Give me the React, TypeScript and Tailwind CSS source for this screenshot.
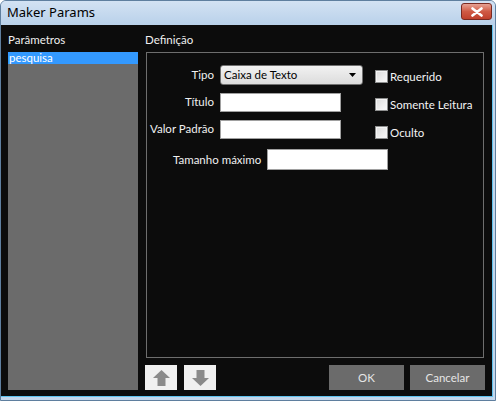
import React from "react";

const font = { fontFamily: 'Lato, "Liberation Sans", sans-serif' };

function Checkbox({ label }: { label: string }) {
  return (
    <div className="flex items-center gap-[2px]">
      <span className="w-[13px] h-[13px] border border-[#8e8f8f] bg-gradient-to-br from-[#dcdcdc] to-[#fafafa] shadow-[inset_0_0_0_1px_#f4f4f4]" />
      <span className="text-[11.5px] leading-[13px] text-[#f4f4f4] whitespace-nowrap">{label}</span>
    </div>
  );
}

function Arrow({ down }: { down?: boolean }) {
  return (
    <svg width="17" height="16" viewBox="0 0 17 16" className={down ? "rotate-180" : ""}>
      <polygon points="8.5,0 17,8 12.5,8 12.5,16 4.5,16 4.5,8 0,8" fill="#8a8a8a" />
    </svg>
  );
}

export default function App() {
  return (
    <div
      className="w-[496px] h-[401px] bg-[#c4d7ec] rounded-t-[6px] border border-[#5f7f9f] flex flex-col overflow-hidden"
      style={font}
    >
      {/* title bar */}
      <div className="h-[24px] shrink-0 flex items-center justify-between pl-[6px] pr-[3px] bg-gradient-to-b from-[#d3e2f3] to-[#b9d1ea]">
        <span className="text-[13px] text-black" style={{ fontFamily: '"Noto Sans", sans-serif' }}>
          Maker Params
        </span>
        <div className="w-[31px] h-[17px] mt-[-3px] rounded-[3px] border border-[#7a2a22] bg-gradient-to-b from-[#e6a193] via-[#cf5a45] to-[#c0402c] flex items-center justify-center">
          <svg width="12" height="10" viewBox="0 0 12 10">
            <path d="M1.5 1.5 L10.5 8.5 M10.5 1.5 L1.5 8.5" stroke="#ffffff" strokeWidth="2.6" strokeLinecap="round" />
          </svg>
        </div>
      </div>

      {/* client area */}
      <div className="flex-1 mr-[2px] mb-[3px] bg-[#0c0c0c] border-b border-r border-[#5fc3ef] flex text-[#f0f0f0] text-[11.5px]">
        {/* left column */}
        <div className="pl-[7px] pt-[6px] w-[137px] flex flex-col">
          <div className="h-[20px] leading-[18px]">Parâmetros</div>
          <div className="mt-[1px] w-[130px] h-[338px] bg-[#6b6b6b]">
            <div className="h-[12px] leading-[12px] bg-[#3399ff] text-white pl-[1px]">pesquisa</div>
          </div>
        </div>

        {/* right column */}
        <div className="pl-[7px] pt-[6px] flex flex-col">
          <div className="h-[20px] leading-[18px]">Definição</div>
          <div className="mt-[1px] ml-[1px] w-[338px] h-[306px] border border-[#6e6e6e]">
            <div className="flex">
              <div className="grid grid-cols-[61px_auto] gap-x-[6px] gap-y-[7px] pl-[6px] pt-[11px] items-center">
                <span className="justify-self-end whitespace-nowrap">Tipo</span>
                <div className="w-[143px] h-[20px] rounded-[3px] border border-[#707070] bg-gradient-to-b from-[#f2f2f2] to-[#dcdcdc] flex items-center justify-between pl-[3px] pr-[6px]">
                  <span className="text-black">Caixa de Texto</span>
                  <svg width="7" height="4" viewBox="0 0 7 4">
                    <polygon points="0,0 7,0 3.5,4" fill="#000" />
                  </svg>
                </div>
                <span className="justify-self-end whitespace-nowrap">Título</span>
                <div className="w-[121px] h-[19px] bg-white border border-[#a0a0a0]" />
                <span className="justify-self-end whitespace-nowrap">Valor Padrão</span>
                <div className="w-[121px] h-[19px] bg-white border border-[#a0a0a0]" />
              </div>
              <div className="flex flex-col gap-[15px] pl-[12px] pt-[17px]">
                <Checkbox label="Requerido" />
                <Checkbox label="Somente Leitura" />
                <Checkbox label="Oculto" />
              </div>
            </div>
            <div className="flex items-center pl-[26px] mt-[10px]">
              <span className="w-[94px] shrink-0 whitespace-nowrap">Tamanho máximo</span>
              <div className="w-[121px] h-[21px] bg-white border border-[#a0a0a0]" />
            </div>
          </div>

          {/* bottom buttons */}
          <div className="flex items-center mt-[7px]">
            <button className="w-[32px] h-[25px] bg-[#f0f0f0] flex items-center justify-center">
              <Arrow />
            </button>
            <button className="ml-[7px] w-[32px] h-[25px] bg-[#f0f0f0] flex items-center justify-center">
              <Arrow down />
            </button>
            <button className="ml-[113px] w-[75px] h-[25px] bg-[#6b6b6b] text-[#e6e6e6]">OK</button>
            <button className="ml-[6px] w-[75px] h-[25px] bg-[#6b6b6b] text-[#e6e6e6]">Cancelar</button>
          </div>
        </div>
      </div>
    </div>
  );
}
